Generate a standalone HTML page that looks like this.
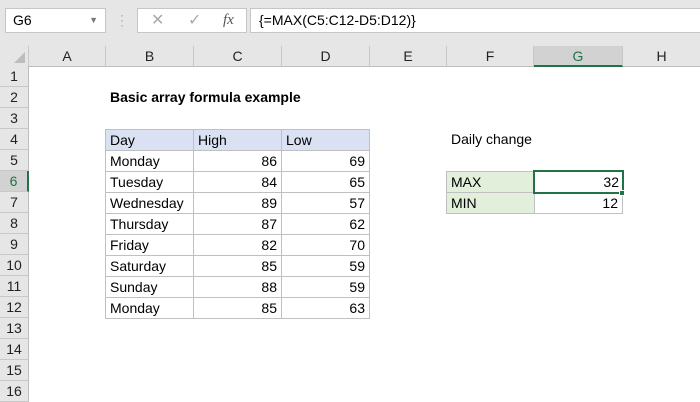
<!DOCTYPE html>
<html><head><style>
body{margin:0;width:700px;height:400px;overflow:hidden;background:#fff;font-family:"Liberation Sans",Calibri,sans-serif;font-size:14px;color:#000;position:relative}
div{position:absolute;box-sizing:border-box}
.top{left:0;top:0;width:700px;height:46px;background:#e6e6e6}
.box{background:#fff;border:1px solid #c6c6c6}
.ch{top:44px;height:21px;background:#e6e6e6;border-right:1px solid #c8c8c8;border-bottom:1px solid #bdbdbd;text-align:center;line-height:21px;font-size:14px;color:#222}
.rh{left:0;width:29px;height:21px;background:#e6e6e6;border-bottom:1px solid #c8c8c8;border-right:1px solid #bdbdbd;text-align:center;line-height:21px;color:#222}
.c{height:22px;border:1px solid #c0c0c0;line-height:20px;padding:0 4px;white-space:nowrap}
.r{text-align:right}
</style></head><body>
<div class="top"></div>
<div class="box" style="left:5px;top:8px;width:101px;height:25px;padding-left:7px;line-height:23px;font-size:14px">G6<span style="position:absolute;right:7px;top:0;font-size:9px;color:#777">▼</span></div>
<div style="left:120px;top:13px;color:#999;font-size:12px;line-height:5px">·<br>·<br>·</div>
<div class="box" style="left:137px;top:8px;width:110px;height:25px;color:#aaa;font-size:16px;line-height:23px"><span style="position:absolute;left:13px">✕</span><span style="position:absolute;left:50px">✓</span><span style="position:absolute;left:85px;color:#555;font-family:'Liberation Serif',serif;font-style:italic;font-size:15px">fx</span></div>
<div class="box" style="left:250px;top:8px;width:452px;height:25px;padding-left:8px;line-height:23px;font-size:14px">{=MAX(C5:C12-D5:D12)}</div>
<div style="left:0;top:2px;width:700px;height:400px">
<div class="ch" style="left:0;width:29px"><span style="position:absolute;right:3px;bottom:3px;width:0;height:0;border-left:11px solid transparent;border-bottom:11px solid #bdbdbd"></span></div>
<div class="ch" style="left:29px;width:77px">A</div>
<div class="ch" style="left:106px;width:88px">B</div>
<div class="ch" style="left:194px;width:88px">C</div>
<div class="ch" style="left:282px;width:88px">D</div>
<div class="ch" style="left:370px;width:77px">E</div>
<div class="ch" style="left:447px;width:87px">F</div>
<div class="ch" style="left:534px;width:89px;background:#d2d2d2;border-bottom:2px solid #217346;color:#217346">G</div>
<div class="ch" style="left:623px;width:77px;border-right:none">H</div>
<div class="rh" style="top:64px">1</div><div class="rh" style="top:85px">2</div><div class="rh" style="top:106px">3</div><div class="rh" style="top:127px">4</div><div class="rh" style="top:148px">5</div><div class="rh" style="top:169px;background:#d2d2d2;border-right:2px solid #217346;color:#217346">6</div><div class="rh" style="top:190px">7</div><div class="rh" style="top:211px">8</div><div class="rh" style="top:232px">9</div><div class="rh" style="top:253px">10</div><div class="rh" style="top:274px">11</div><div class="rh" style="top:295px">12</div><div class="rh" style="top:316px">13</div><div class="rh" style="top:337px">14</div><div class="rh" style="top:358px">15</div><div class="rh" style="top:379px">16</div>
<div style="left:110px;top:85px;line-height:21px;font-weight:bold">Basic array formula example</div>
<div style="left:451px;top:127px;line-height:21px">Daily change</div>
<div class="c" style="left:105px;top:127px;width:89px;background:#d9e1f2">Day</div>
<div class="c" style="left:193px;top:127px;width:89px;background:#d9e1f2">High</div>
<div class="c" style="left:281px;top:127px;width:89px;background:#d9e1f2">Low</div>
<div class="c" style="left:105px;top:148px;width:89px">Monday</div><div class="c r" style="left:193px;top:148px;width:89px">86</div><div class="c r" style="left:281px;top:148px;width:89px">69</div>
<div class="c" style="left:105px;top:169px;width:89px">Tuesday</div><div class="c r" style="left:193px;top:169px;width:89px">84</div><div class="c r" style="left:281px;top:169px;width:89px">65</div>
<div class="c" style="left:105px;top:190px;width:89px">Wednesday</div><div class="c r" style="left:193px;top:190px;width:89px">89</div><div class="c r" style="left:281px;top:190px;width:89px">57</div>
<div class="c" style="left:105px;top:211px;width:89px">Thursday</div><div class="c r" style="left:193px;top:211px;width:89px">87</div><div class="c r" style="left:281px;top:211px;width:89px">62</div>
<div class="c" style="left:105px;top:232px;width:89px">Friday</div><div class="c r" style="left:193px;top:232px;width:89px">82</div><div class="c r" style="left:281px;top:232px;width:89px">70</div>
<div class="c" style="left:105px;top:253px;width:89px">Saturday</div><div class="c r" style="left:193px;top:253px;width:89px">85</div><div class="c r" style="left:281px;top:253px;width:89px">59</div>
<div class="c" style="left:105px;top:274px;width:89px">Sunday</div><div class="c r" style="left:193px;top:274px;width:89px">88</div><div class="c r" style="left:281px;top:274px;width:89px">59</div>
<div class="c" style="left:105px;top:295px;width:89px">Monday</div><div class="c r" style="left:193px;top:295px;width:89px">85</div><div class="c r" style="left:281px;top:295px;width:89px">63</div>
<div class="c" style="left:446px;top:169px;width:89px;background:#e2efda">MAX</div>
<div class="c" style="left:446px;top:190px;width:89px;background:#e2efda">MIN</div>
<div class="c r" style="left:534px;top:190px;width:89px">12</div>
<div class="c r" style="left:533px;top:168px;width:91px;height:24px;border:2px solid #217346;line-height:20px;padding-right:3px">32</div>
<div style="left:619px;top:188px;width:6px;height:6px;background:#217346;border:1px solid #fff"></div>
</div>
</body></html>
